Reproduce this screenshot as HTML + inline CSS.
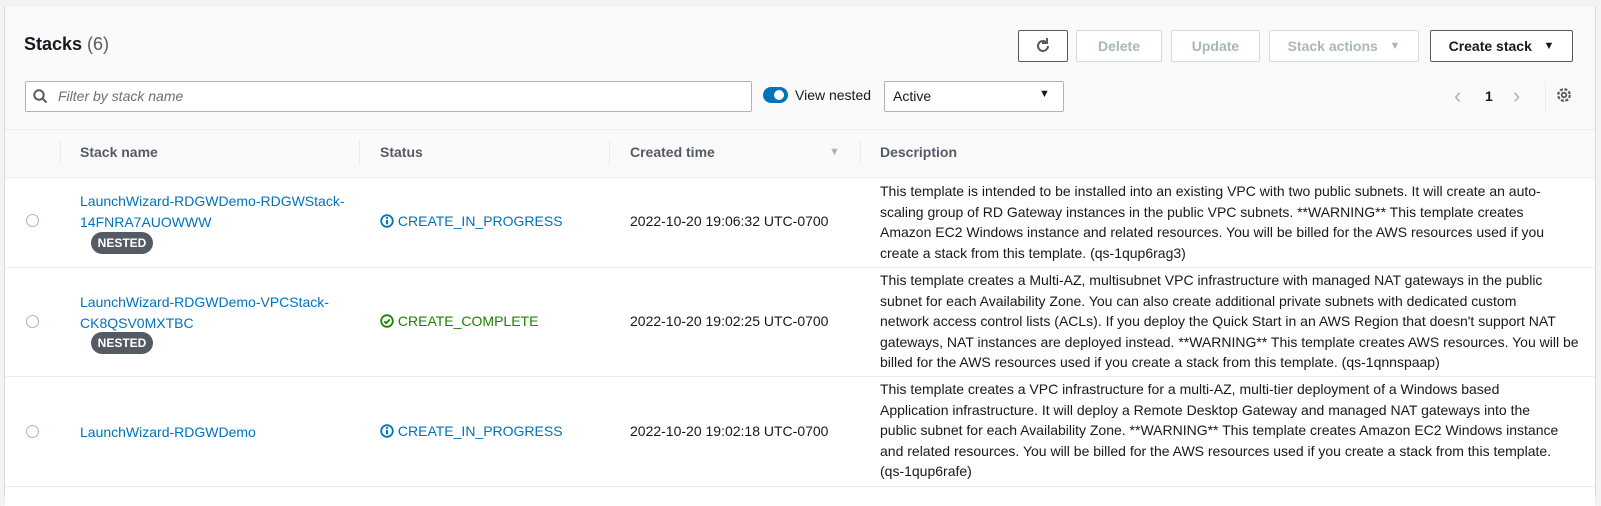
<!DOCTYPE html>
<html><head><meta charset="utf-8"><style>
*{box-sizing:border-box;margin:0;padding:0}
body{width:1601px;height:492px;background:#f2f3f3;font-family:"Liberation Sans",Arial,sans-serif;position:relative;overflow:hidden;color:#16191f}
.panel{position:absolute;left:4px;top:5px;width:1592px;height:492px;background:#fafafa;border-left:1px solid #d5dbdb;border-right:1px solid #d5dbdb;border-top:1px solid #eaeded}
.a{position:absolute;white-space:nowrap}
.btn{position:absolute;top:30px;height:32px;border:1px solid #d5dbdb;border-radius:2px;background:#fff;color:#aab7b8;font-weight:bold;font-size:14px;display:flex;align-items:center;justify-content:center}
.row{position:absolute;left:5px;width:1590px;background:#fff;border-top:1px solid #eaeded}
.link{color:#0073bb;font-size:14px;line-height:20.5px}
.desc{position:absolute;left:880px;font-size:14px;line-height:20.5px;color:#16191f;white-space:nowrap}
.radio{position:absolute;left:26px;width:13px;height:13px;border:1px solid #aab7b8;border-radius:50%}
.nested{position:absolute;left:91px;width:62px;height:22px;border-radius:11px;background:#545b64;color:#fff;font-size:12px;font-weight:bold;display:flex;align-items:center;justify-content:center}
.th{position:absolute;top:144px;font-weight:bold;font-size:14px;color:#545b64}
.sep{position:absolute;top:140px;width:1px;height:25px;background:#eaeded}
.st{font-size:14px}
</style></head><body>
<div class="panel"></div>
<div class="a" style="left:24px;top:34px;font-size:18px;font-weight:bold">Stacks <span style="font-weight:normal;color:#545b64">(6)</span></div>
<div class="btn" style="left:1018px;width:50px;border-color:#545b64;color:#545b64"><svg width="18" height="18" viewBox="0 0 18 18"><path d="M14 9a5 5 0 1 1-2-4" fill="none" stroke="#545b64" stroke-width="2"/><path d="M13 1v5h-5" fill="none" stroke="#545b64" stroke-width="2"/></svg></div>
<div class="btn" style="left:1076px;width:86px">Delete</div>
<div class="btn" style="left:1171px;width:89px">Update</div>
<div class="btn" style="left:1269px;width:150px">Stack actions&nbsp;&nbsp;&nbsp;<span style="font-size:11px">▼</span></div>
<div class="btn" style="left:1430px;width:143px;border-color:#545b64;color:#16191f">Create stack&nbsp;&nbsp;&nbsp;<span style="font-size:11px">▼</span></div>
<div class="a" style="left:25px;top:81px;width:727px;height:31px;border:1px solid #aab7b8;border-radius:2px;background:#fff"></div>
<svg class="a" style="left:33px;top:89px" width="15" height="15" viewBox="0 0 15 15"><circle cx="6" cy="6" r="4.7" fill="none" stroke="#545b64" stroke-width="2"/><path d="M9.5 9.5l4 4" stroke="#545b64" stroke-width="2"/></svg>
<div class="a" style="left:58px;top:88px;font-style:italic;color:#687078;font-size:14px">Filter by stack name</div>
<div class="a" style="left:763px;top:87px;width:25px;height:16px;border-radius:8px;background:#0073bb"></div>
<div class="a" style="left:774px;top:90px;width:10px;height:10px;border-radius:50%;background:#fff"></div>
<div class="a" style="left:795px;top:87px;font-size:14px">View nested</div>
<div class="a" style="left:884px;top:81px;width:180px;height:31px;border:1px solid #aab7b8;border-radius:2px;background:#fff"></div>
<div class="a" style="left:893px;top:88px;font-size:14px">Active</div>
<div class="a" style="left:1039px;top:88px;font-size:11px;color:#16191f">▼</div>
<div class="a" style="left:1454px;top:83px;font-size:22px;color:#aab7b8">&#x2039;</div>
<div class="a" style="left:1485px;top:88px;font-size:14px;font-weight:bold">1</div>
<div class="a" style="left:1513px;top:83px;font-size:22px;color:#aab7b8">&#x203A;</div>
<div class="a" style="left:1545px;top:82px;width:1px;height:30px;background:#eaeded"></div>
<svg class="a" style="left:1556px;top:87px" width="16" height="16" viewBox="0 0 16 16"><circle cx="8" cy="8" r="2.3" fill="none" stroke="#545b64" stroke-width="1.8"/><circle cx="8" cy="8" r="5.8" fill="none" stroke="#545b64" stroke-width="2.2" stroke-dasharray="3 1.6"/></svg>
<div class="a" style="left:5px;top:129px;width:1590px;height:1px;background:#eaeded"></div>
<div class="sep" style="left:60px"></div><div class="sep" style="left:359px"></div><div class="sep" style="left:609px"></div><div class="sep" style="left:860px"></div>
<div class="th" style="left:80px">Stack name</div>
<div class="th" style="left:380px">Status</div>
<div class="th" style="left:630px">Created time</div>
<div class="a" style="left:829px;top:146px;font-size:11px;color:#aab7b8">▼</div>
<div class="th" style="left:880px">Description</div>

<div class="row" style="top:177px;height:90px"></div>
<div class="row" style="top:267px;height:109px"></div>
<div class="row" style="top:376px;height:110px"></div>
<div class="row" style="top:486px;height:20px"></div>

<div class="radio" style="top:214px"></div>
<div class="a link" style="left:80px;top:191px">LaunchWizard-RDGWDemo-RDGWStack-<br>14FNRA7AUOWWW</div>
<div class="nested" style="top:232px">NESTED</div>
<div class="a st" style="left:380px;top:213px;color:#0073bb"><svg width="14" height="14" viewBox="0 0 14 14" style="vertical-align:-2px"><circle cx="7" cy="7" r="5.8" fill="none" stroke="#0073bb" stroke-width="1.8"/><path d="M7 6v4.3" stroke="#0073bb" stroke-width="2"/><circle cx="7" cy="4" r="1.1" fill="#0073bb"/></svg> CREATE_IN_PROGRESS</div>
<div class="a" style="left:630px;top:213px;font-size:14px">2022-10-20 19:06:32 UTC-0700</div>
<div class="desc" style="top:181px">This template is intended to be installed into an existing VPC with two public subnets. It will create an auto-<br>scaling group of RD Gateway instances in the public VPC subnets. **WARNING** This template creates<br>Amazon EC2 Windows instance and related resources. You will be billed for the AWS resources used if you<br>create a stack from this template. (qs-1qup6rag3)</div>

<div class="radio" style="top:315px"></div>
<div class="a link" style="left:80px;top:292px">LaunchWizard-RDGWDemo-VPCStack-<br>CK8QSV0MXTBC</div>
<div class="nested" style="top:332px">NESTED</div>
<div class="a st" style="left:380px;top:313px;color:#1d8102"><svg width="14" height="14" viewBox="0 0 14 14" style="vertical-align:-2px"><circle cx="7" cy="7" r="5.8" fill="none" stroke="#1d8102" stroke-width="1.8"/><path d="M4.2 7.2l2 2 3.6-3.8" fill="none" stroke="#1d8102" stroke-width="1.8"/></svg> CREATE_COMPLETE</div>
<div class="a" style="left:630px;top:313px;font-size:14px">2022-10-20 19:02:25 UTC-0700</div>
<div class="desc" style="top:270px">This template creates a Multi-AZ, multisubnet VPC infrastructure with managed NAT gateways in the public<br>subnet for each Availability Zone. You can also create additional private subnets with dedicated custom<br>network access control lists (ACLs). If you deploy the Quick Start in an AWS Region that doesn't support NAT<br>gateways, NAT instances are deployed instead. **WARNING** This template creates AWS resources. You will be<br>billed for the AWS resources used if you create a stack from this template. (qs-1qnnspaap)</div>

<div class="radio" style="top:425px"></div>
<div class="a link" style="left:80px;top:422px">LaunchWizard-RDGWDemo</div>
<div class="a st" style="left:380px;top:423px;color:#0073bb"><svg width="14" height="14" viewBox="0 0 14 14" style="vertical-align:-2px"><circle cx="7" cy="7" r="5.8" fill="none" stroke="#0073bb" stroke-width="1.8"/><path d="M7 6v4.3" stroke="#0073bb" stroke-width="2"/><circle cx="7" cy="4" r="1.1" fill="#0073bb"/></svg> CREATE_IN_PROGRESS</div>
<div class="a" style="left:630px;top:423px;font-size:14px">2022-10-20 19:02:18 UTC-0700</div>
<div class="desc" style="top:379px">This template creates a VPC infrastructure for a multi-AZ, multi-tier deployment of a Windows based<br>Application infrastructure. It will deploy a Remote Desktop Gateway and managed NAT gateways into the<br>public subnet for each Availability Zone. **WARNING** This template creates Amazon EC2 Windows instance<br>and related resources. You will be billed for the AWS resources used if you create a stack from this template.<br>(qs-1qup6rafe)</div>
</body></html>
